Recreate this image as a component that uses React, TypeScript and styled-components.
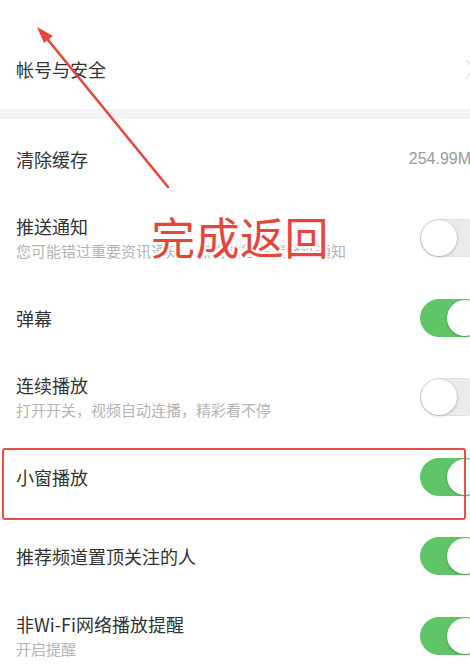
import React from "react";
import styled, { createGlobalStyle } from "styled-components";

const GlobalStyle = createGlobalStyle`
  html, body {
    margin: 0;
    padding: 0;
    background: #ffffff;
    overflow: hidden;
  }
  body {
    font-family: "Noto Sans CJK SC", "Noto Sans", sans-serif;
  }
`;

const Page = styled.div`
  position: relative;
  width: 500px;
  height: 668px;
  background: #ffffff;
  overflow: hidden;
`;

const Group = styled.div<{ $top?: number }>`
  display: flex;
  flex-direction: column;
  padding-top: ${(p) => p.$top ?? 0}px;
`;

const SectionGap = styled.div`
  height: 10px;
  background: #f4f4f4;
`;

const Row = styled.div`
  box-sizing: border-box;
  height: 79.5px;
  padding: 0 16px;
  display: flex;
  align-items: center;
  justify-content: space-between;
`;

const TextBlock = styled.div`
  display: flex;
  flex-direction: column;
  gap: 4px;
`;

const Title = styled.div`
  font-size: 18px;
  line-height: 22px;
  color: #333333;
`;

const Subtitle = styled.div`
  font-size: 15px;
  line-height: 20px;
  color: #b4b4b4;
`;

const Value = styled.div`
  font-family: "Liberation Sans", Arial, sans-serif;
  font-size: 16px;
  color: #9a9a9a;
  margin-right: 13px;
`;

const Chevron = styled.svg`
  width: 10px;
  height: 20px;
  margin-right: 9px;
  color: #e6e6e6;
`;

const Track = styled.div<{ $on: boolean }>`
  position: relative;
  flex-shrink: 0;
  box-sizing: border-box;
  width: 64px;
  height: 38px;
  border-radius: 19px;
  background: ${(p) => (p.$on ? "#5fc567" : "#ebebeb")};
  border: 1px solid ${(p) => (p.$on ? "#5fc567" : "#e2e2e2")};
`;

const Knob = styled.div<{ $on: boolean }>`
  position: absolute;
  top: 0;
  left: ${(p) => (p.$on ? "26px" : "0")};
  width: 36px;
  height: 36px;
  border-radius: 50%;
  background: #ffffff;
  box-shadow: 0 1px 3px rgba(0, 0, 0, 0.22), 0 0 0 0.5px rgba(0, 0, 0, 0.1);
`;

const Switch = ({ on }: { on: boolean }) => (
  <Track $on={on}>
    <Knob $on={on} />
  </Track>
);

const ArrowSvg = styled.svg`
  position: absolute;
  left: 0;
  top: 0;
  width: 470px;
  height: 668px;
  pointer-events: none;
`;

const Label = styled.div`
  position: absolute;
  left: 151px;
  top: 208px;
  font-size: 44px;
  line-height: 56px;
  letter-spacing: 0.5px;
  color: #e6453b;
  text-shadow: 2px 0 0 #fff, -2px 0 0 #fff, 0 2px 0 #fff, 0 -2px 0 #fff,
    2px 2px 0 #fff, -2px -2px 0 #fff, 2px -2px 0 #fff, -2px 2px 0 #fff;
`;

const Highlight = styled.div`
  position: absolute;
  left: 2px;
  top: 448px;
  width: 464px;
  height: 72px;
  box-sizing: border-box;
  border: 2px solid #e2514c;
  border-radius: 3px;
  pointer-events: none;
`;

type Item = {
  title: string;
  sub?: string;
  on: boolean;
};

const toggles: Item[] = [
  { title: "推送通知", sub: "您可能错过重要资讯通知，点击前往设置允许通知", on: false },
  { title: "弹幕", on: true },
  { title: "连续播放", sub: "打开开关，视频自动连播，精彩看不停", on: false },
  { title: "小窗播放", on: true },
  { title: "推荐频道置顶关注的人", on: true },
  { title: "非Wi-Fi网络播放提醒", sub: "开启提醒", on: true },
];

export default function App() {
  return (
    <Page>
      <GlobalStyle />
      <Group $top={29.5}>
        <Row>
          <Title>帐号与安全</Title>
          <Chevron viewBox="0 0 10 20" fill="none">
            <path d="M1 1l8 9-8 9" stroke="currentColor" strokeWidth="1.4" />
          </Chevron>
        </Row>
      </Group>
      <SectionGap />
      <Group>
        <Row>
          <Title>清除缓存</Title>
          <Value>254.99M</Value>
        </Row>
        {toggles.map((t) => (
          <Row key={t.title}>
            <TextBlock>
              <Title>{t.title}</Title>
              {t.sub && <Subtitle>{t.sub}</Subtitle>}
            </TextBlock>
            <Switch on={t.on} />
          </Row>
        ))}
      </Group>

      {/* annotation layer */}
      <ArrowSvg viewBox="0 0 470 668">
        <line x1="168" y1="187" x2="44" y2="35" stroke="#e4483d" strokeWidth="2.6" strokeLinecap="round" />
        <polygon points="37,27 53,36 44,43" fill="#e4483d" />
      </ArrowSvg>
      <Label>完成返回</Label>
      <Highlight />
    </Page>
  );
}
